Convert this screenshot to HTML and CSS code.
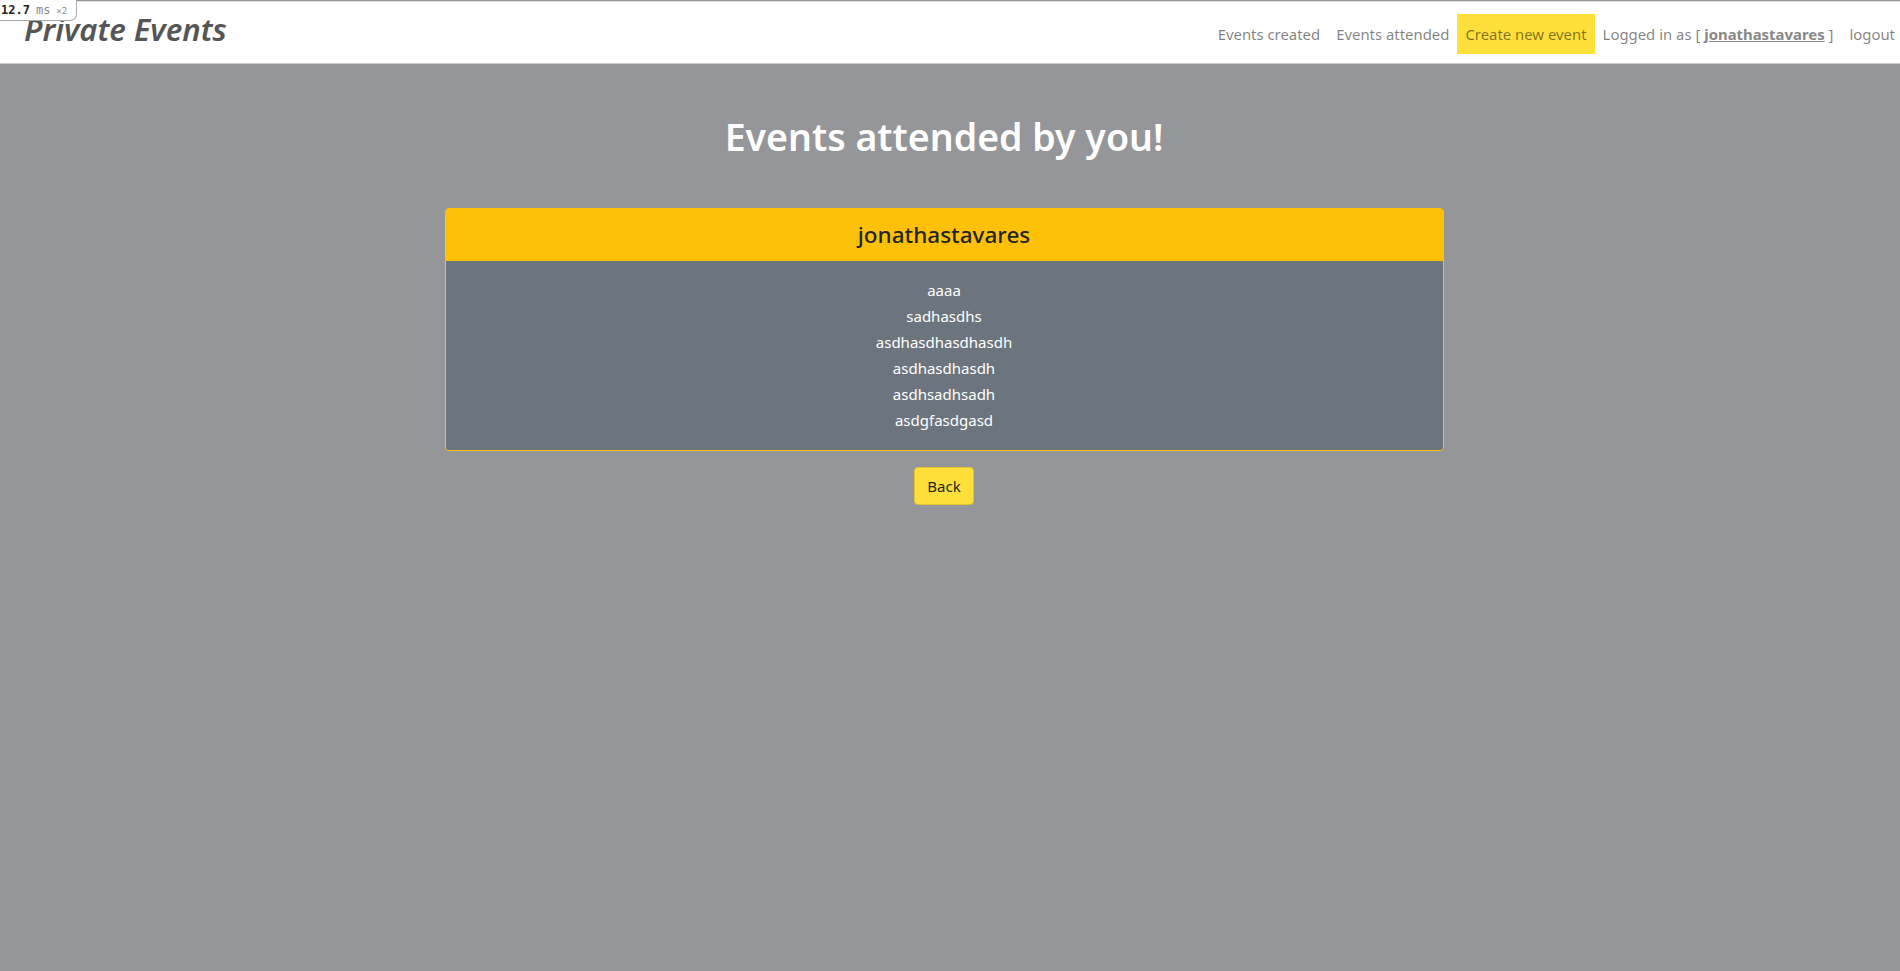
FILE: index.html
```html
<!DOCTYPE html>
<html lang="en">
<head>
<meta charset="utf-8">
<title>Private Events</title>
<link rel="stylesheet" href="styles.css">
</head>
<body>
<div class="profiler"><span class="prof-time">12.7</span><span class="prof-unit">ms</span><span class="prof-count">×2</span></div>
<header class="navbar">
  <a class="brand" href="#">Private Events</a>
  <ul class="nav">
    <li><a class="nav-link" href="#">Events created</a></li>
    <li><a class="nav-link" href="#">Events attended</a></li>
    <li><a class="nav-link nav-link-active" href="#">Create new event</a></li>
    <li><span class="nav-link">Logged in as [ <a class="user-link" href="#">jonathastavares</a> ]</span></li>
    <li><a class="nav-link nav-link-last" href="#">logout</a></li>
  </ul>
</header>
<main class="main">
  <h1 class="title">Events attended by you!</h1>
  <section class="card">
    <div class="card-header">jonathastavares</div>
    <div class="card-body">
      <div class="event">aaaa</div>
      <div class="event">sadhasdhs</div>
      <div class="event">asdhasdhasdhasdh</div>
      <div class="event">asdhasdhasdh</div>
      <div class="event">asdhsadhsadh</div>
      <div class="event">asdgfasdgasd</div>
    </div>
  </section>
  <div class="actions"><a class="btn" href="#">Back</a></div>
</main>
</body>
</html>
```
FILE: styles.css
```css
* { box-sizing: border-box; }
html, body { margin: 0; padding: 0; }
body {
  background: #959699;
  font-family: "Noto Sans", "Open Sans", sans-serif;
  font-size: 16px;
  line-height: 24px;
  color: #212529;
  min-height: 971px;
}
a { text-decoration: none; color: inherit; }

.profiler {
  position: absolute;
  top: 0;
  left: -3px;
  height: 21px;
  display: flex;
  align-items: baseline;
  gap: 6px;
  padding: 2px 9px 0 3px;
  background: #fff;
  border: 1px solid #a8a8a8;
  border-top: none;
  border-radius: 0 0 7px 0;
  font-family: "DejaVu Sans Mono", monospace;
  font-size: 12px;
  line-height: 17px;
  white-space: nowrap;
  z-index: 5;
}
.prof-time { color: #222; font-weight: bold; }
.prof-unit { color: #888; }
.prof-count { color: #888; font-size: 9px; }

.navbar {
  display: flex;
  align-items: center;
  justify-content: space-between;
  height: 63px;
  background: #fff;
  border-top: 1px solid #dedede;
  margin-top: 1px;
  border-bottom: 1px solid #c8c8c8;
  padding: 0 0 0 24px;
}
.brand {
  display: block;
  font-size: 31px;
  font-style: italic;
  font-weight: 600;
  color: #555;
  line-height: 30px;
  height: 30px;
  overflow: hidden;
  margin-top: -7px;
}
.nav {
  display: flex;
  align-items: center;
  list-style: none;
  margin: 0;
  padding: 0;
  margin-top: 2px;
}
.nav-link {
  display: block;
  padding: 8px 8px;
  color: rgba(0, 0, 0, 0.5);
  font-size: 14.9px;
  white-space: nowrap;
}
.nav-link-active { background: #ffe03a; }
.nav-link-last { padding-right: 5px; }
.user-link {
  font-weight: bold;
  text-decoration: underline;
  color: #888;
}

.main {
  padding: 0 12px 40px 0;
  display: flex;
  flex-direction: column;
  align-items: center;
}
.title {
  margin: 49px 0 47px;
  color: #fff;
  font-size: 37.5px;
  font-weight: 600;
  line-height: 48px;
}
.card {
  width: 999px;
  border: 1px solid #ffc107;
  border-radius: 4px;
  overflow: hidden;
}
.card-header {
  background: #ffc107;
  padding: 12px 20px;
  text-align: center;
  font-size: 22.5px;
  font-weight: 500;
  line-height: 28px;
  color: #212529;
}
.card-body {
  background: #6c757d;
  padding: 16px 20px 17px;
  text-align: center;
  color: #fff;
}
.event { line-height: 26px; font-size: 15px; }
.actions { margin-top: 16px; }
.btn {
  display: inline-block;
  padding: 6px 12px;
  background: #ffdf3a;
  border: 1px solid #e3c02e;
  border-radius: 4px;
  font-size: 15px;
  color: #212529;
  line-height: 24px;
}
```
